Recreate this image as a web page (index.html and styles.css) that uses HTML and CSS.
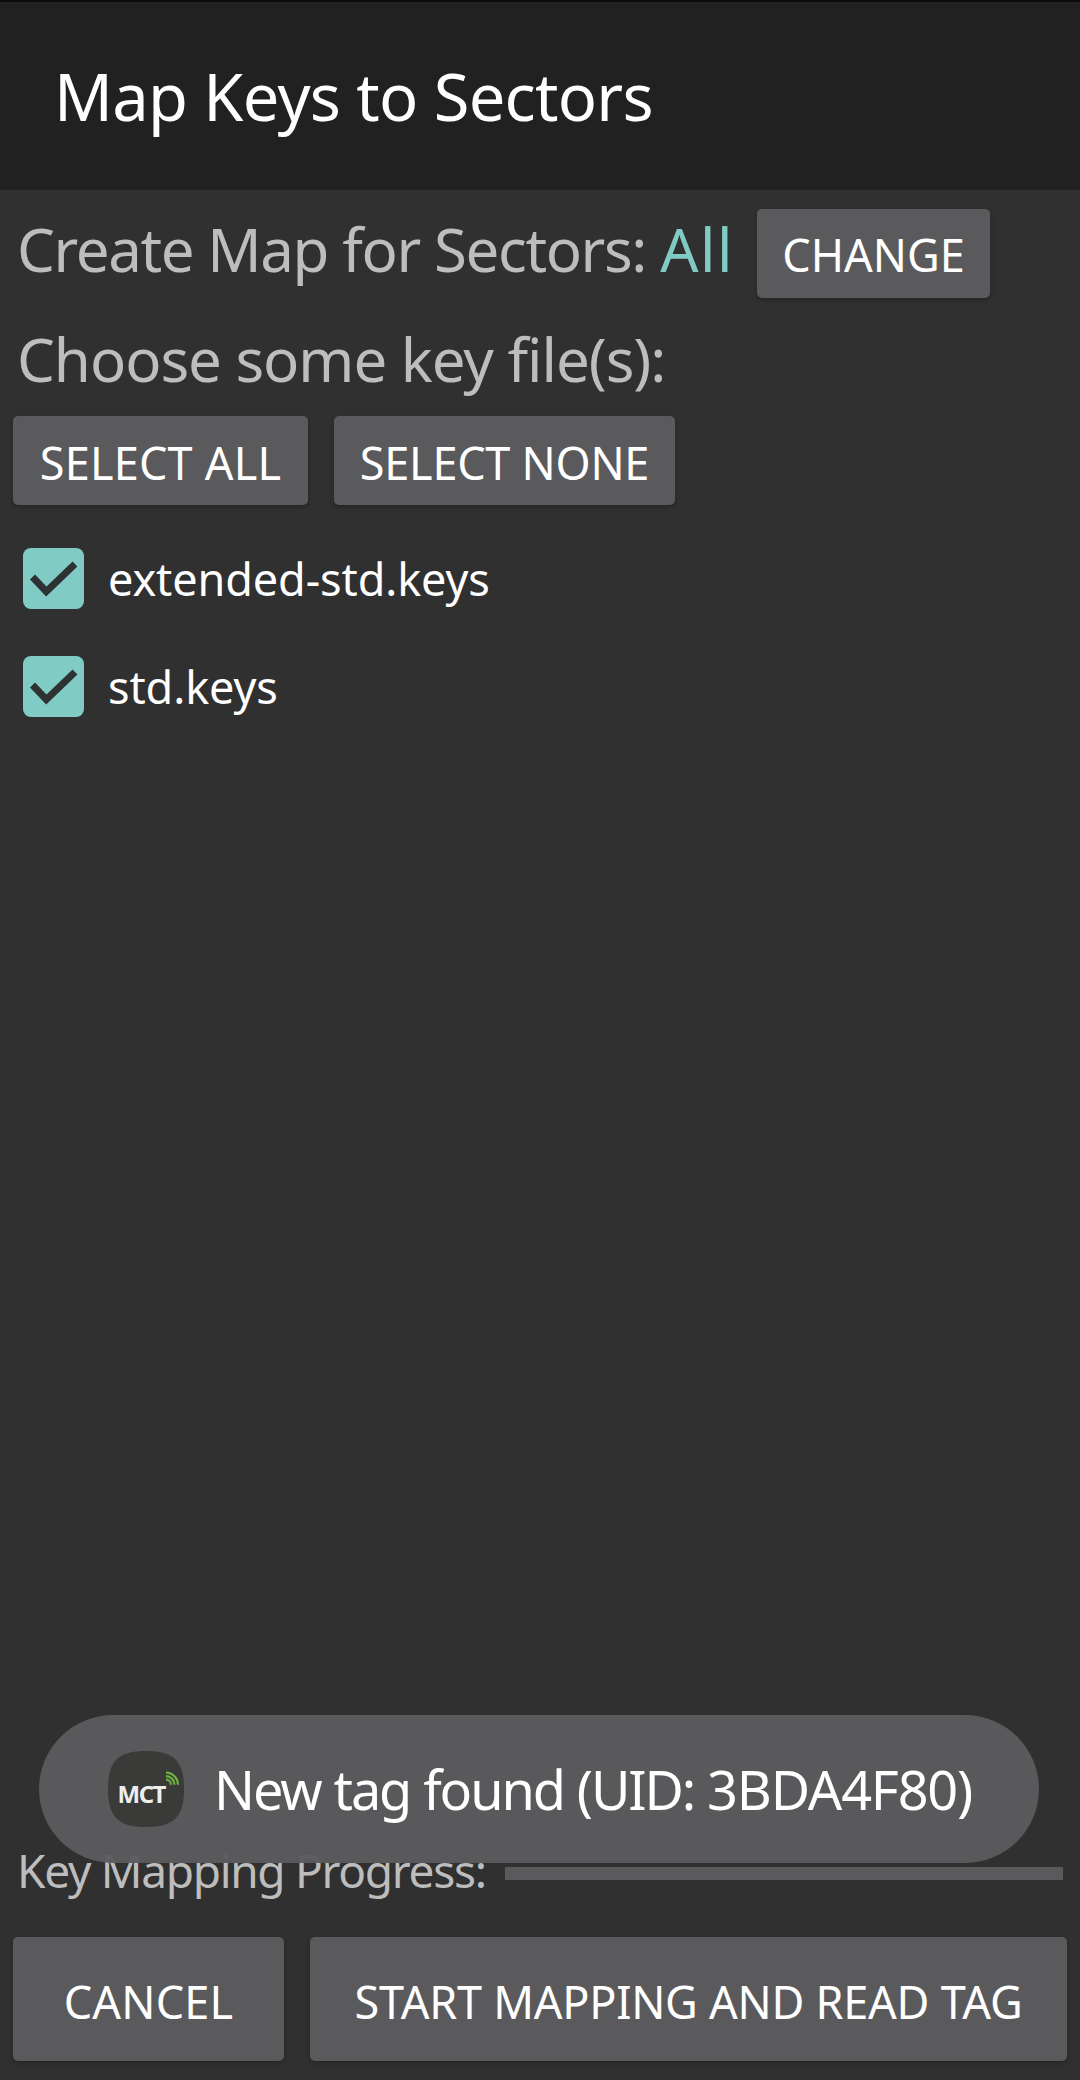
FILE: index.html
```html
<!DOCTYPE html>
<html lang="en">
<head>
<meta charset="utf-8">
<title>Map Keys to Sectors</title>
<link rel="stylesheet" href="styles.css">
</head>
<body>
<div class="app">
  <header class="toolbar"><h1 class="title">Map Keys to Sectors</h1></header>
  <main class="content">
    <div class="sector-row">
      <span class="label sector-label">Create Map for Sectors: <span class="accent">All</span></span>
      <button class="btn btn-change">CHANGE</button>
    </div>
    <div class="label choose">Choose some key file(s):</div>
    <div class="select-row">
      <button class="btn btn-all">SELECT ALL</button>
      <button class="btn btn-none">SELECT NONE</button>
    </div>
    <ul class="files">
      <li class="file">
        <svg class="check" viewBox="0 0 61 61"><rect width="61" height="61" rx="8" fill="#80cbc4"/><path d="M9.5 29 L23.3 43.5 L52 16" fill="none" stroke="#2f3232" stroke-width="7"/></svg>
        <span class="file-name">extended-std.keys</span>
      </li>
      <li class="file">
        <svg class="check" viewBox="0 0 61 61"><rect width="61" height="61" rx="8" fill="#80cbc4"/><path d="M9.5 29 L23.3 43.5 L52 16" fill="none" stroke="#2f3232" stroke-width="7"/></svg>
        <span class="file-name">std.keys</span>
      </li>
    </ul>
  </main>
  <div class="progress-row">
    <span class="progress-label">Key Mapping Progress:</span>
    <div class="progress-bar"></div>
  </div>
  <div class="action-row">
    <button class="btn btn-cancel">CANCEL</button>
    <button class="btn btn-start">START MAPPING AND READ TAG</button>
  </div>
  <div class="toast">
    <svg class="toast-icon" viewBox="0 0 76 76">
      <path d="M38 0 C66 0 76 10 76 38 C76 66 66 76 38 76 C10 76 0 66 0 38 C0 10 10 0 38 0 Z" fill="#3a3b39"/>
      <text x="9.500" y="52" class="logo-text">MCT</text>
      <g fill="none" stroke="#6db33f" stroke-width="2.200">
        <path d="M58 28.700 A5 5 0 0 1 63 33.700"/>
        <path d="M58 25.200 A8.500 8.500 0 0 1 66.500 33.700"/>
        <path d="M58 21.700 A12 12 0 0 1 70 33.700"/>
      </g>
    </svg>
    <span class="toast-text">New tag found (UID: <span class="toast-uid">3BDA4F80)</span></span>
  </div>
</div>
</body>
</html>
```
FILE: styles.css
```css
* { box-sizing: border-box; }
html, body { margin: 0; padding: 0; background: #303030; }
body { font-family: "Noto Sans", "Open Sans", sans-serif; font-weight: 400; }
.app { position: relative; width: 1080px; height: 2080px; display: flex; flex-direction: column; background: #303030; }
.toolbar { height: 190px; background: #212121; border-top: 2px solid #0c0c0c; display: flex; align-items: center; padding: 0 0 0 54px; flex: none; }
.title { margin: 0; font-size: 65px; font-weight: 400; letter-spacing: -0.75px; color: #fff; line-height: 1; }
.content { flex: 1; padding: 19px 0 0 13px; }
.sector-row { display: flex; align-items: center; height: 89px; }
.label { font-size: 60px; letter-spacing: -1.05px; color: #bdbdbd; padding-left: 4px; line-height: 1; white-space: pre; }
.sector-label { letter-spacing: -1.4px; margin-bottom: 9px; }
.accent { color: #80cbc4; letter-spacing: 1.5px; }
.btn { border: 0; border-radius: 5px; background: #5a5a5c; color: #fff; font: inherit; font-size: 45px; padding: 4px 0 0; box-shadow: 0 2px 4px rgba(0,0,0,.25); text-align: center; line-height: 1; }
.btn-change { width: 233px; height: 89px; margin-left: 23px; padding-top: 2px; }
.choose { margin-top: 31px; height: 78px; }
.select-row { display: flex; gap: 26px; margin-top: 9px; }
.btn-all { width: 295px; height: 89px; letter-spacing: 0.2px; }
.btn-none { width: 341px; height: 89px; letter-spacing: -0.25px; }
.files { list-style: none; margin: 43px 0 0 10px; padding: 0; display: flex; flex-direction: column; gap: 47px; }
.file { display: flex; align-items: center; height: 61px; }
.check { width: 61px; height: 61px; flex: none; }
.file-name { margin-left: 24px; font-size: 45px; letter-spacing: -0.1px; color: #fff; line-height: 1; }
.progress-row { display: flex; align-items: center; padding: 0 17px 0 17px; height: 60px; margin-bottom: 7px; flex: none; }
.progress-label { font-size: 46px; letter-spacing: -1.3px; color: #bdbdbd; line-height: 1; margin-bottom: 7px; }
.progress-bar { flex: 1; height: 13px; margin-left: 19px; background: #5a5a5c; }
.action-row { display: flex; gap: 26px; padding: 27px 13px 19px; flex: none; }
.btn-cancel { width: 271px; height: 124px; letter-spacing: 0.2px; }
.btn-start { flex: 1; height: 124px; letter-spacing: -0.25px; }
.toast { position: absolute; left: 39px; top: 1715px; width: 1000px; height: 148px; border-radius: 74px; background: rgba(91,91,93,.96); display: flex; align-items: center; padding-left: 69px; }
.toast-icon { width: 76px; height: 76px; flex: none; }
.logo-text { font-family: "Noto Sans", sans-serif; font-size: 24px; font-weight: 700; letter-spacing: -1.5px; fill: #eeeeee; }
.toast-text { margin-left: 30px; font-size: 54px; letter-spacing: -2.1px; color: #fff; line-height: 1; white-space: nowrap; word-spacing: 1px; }
.toast-uid { letter-spacing: -1.2px; }
```
